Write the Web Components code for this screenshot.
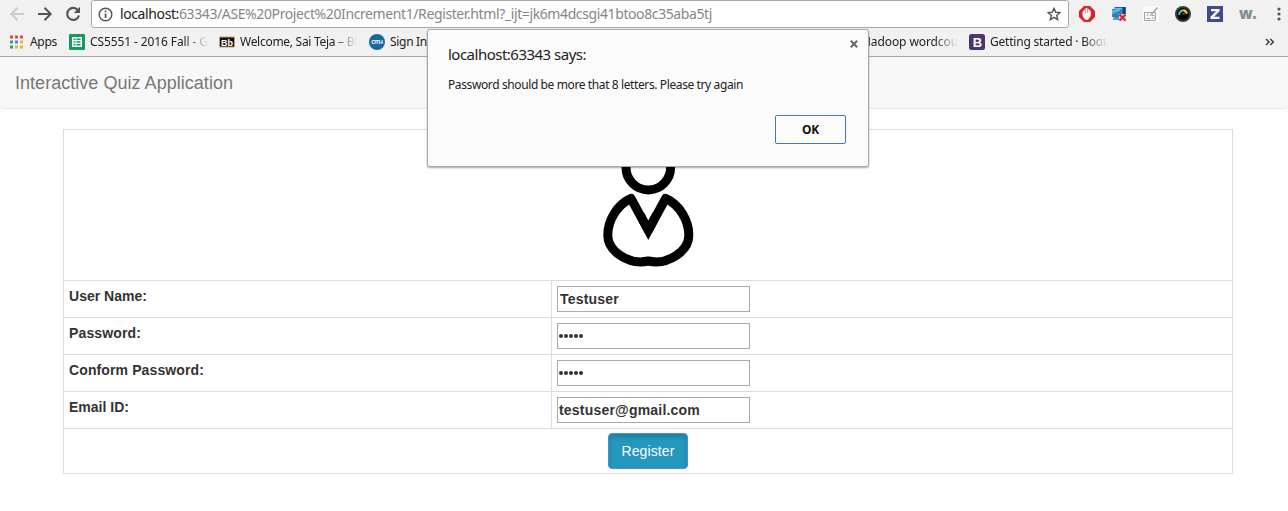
<!DOCTYPE html>
<html lang="en">
<head>
<meta charset="utf-8">
<title>Register</title>
<style>
html,body{margin:0;height:100%;background:#fff;overflow:hidden}
body{font-family:"Liberation Sans",Arial,sans-serif;color:#333}
</style>
</head>
<body>
<quiz-window></quiz-window>
<script>
const define = (name, html, ready) => {
  const t = document.createElement('template');
  t.innerHTML = html;
  customElements.define(name, class extends HTMLElement {
    constructor() {
      super();
      this.attachShadow({mode: 'open'}).append(t.content.cloneNode(true));
    }
    connectedCallback() { if (ready) ready(this, this.shadowRoot); }
  });
};

/* A single line of text tracked so that it fills the width given in "w". */
define('fit-text', `<style>:host{display:block;white-space:pre;flex:none}span{display:inline-block}</style><span><slot></slot></span>`,
(el, root) => {
  const span = root.querySelector('span');
  const w = +el.getAttribute('w');
  const n = el.textContent.length;
  el.style.width = w + 'px';
  span.style.letterSpacing = '0';
  const natural = span.getBoundingClientRect().width;
  if (natural) span.style.letterSpacing = ((w - natural) / n) + 'px';
});

define('book-mark', `<style>
:host{display:flex;align-items:center;height:16px;flex:none;font:12px/16px "Noto Sans","Open Sans",sans-serif;color:#222}
::slotted(svg){flex:none;margin-right:5px;display:block}
:host([fade]) ::slotted(fit-text){-webkit-mask-image:linear-gradient(90deg,#000 calc(100% - 24px),transparent);mask-image:linear-gradient(90deg,#000 calc(100% - 24px),transparent)}
</style><slot></slot>`);

define('browser-bar', `<style>
:host{display:block;height:57px;background:#f1f1f1;border-bottom:1px solid #a9a9a9;box-sizing:border-box}
.top{display:flex;height:28px;align-items:center}
.nav{display:flex;width:91px;box-sizing:border-box;padding-left:9px;gap:12px}
svg{display:block;flex:none}
.box{width:978px;height:28px;box-sizing:border-box;border:1px solid #a8a8a8;border-radius:3px;background:#fff;display:flex;align-items:center;padding:0 7px 0 6px;font:14px/20px "Noto Sans","Open Sans",sans-serif;color:#868686}
.box b{font-weight:400;color:#222}
.box fit-text{margin-left:7px;margin-right:auto}
.ext{display:flex;flex:1;padding-left:10px;gap:16px;align-items:center}
.marks{display:flex;height:28px;align-items:center;padding-left:9px}
.w{font:800 15px/16px "Open Sans",sans-serif;color:#829096;width:16px;margin-top:-3px}
</style>
<div class="top">
 <div class="nav">
  <svg width="16" height="16" viewBox="0 0 16 16" fill="none" stroke="#ccc" stroke-width="2"><path d="M15 8H3M8.5 1.800L2.300 8l6.200 6.200"/></svg>
  <svg width="16" height="16" viewBox="0 0 16 16" fill="none" stroke="#555" stroke-width="2"><path d="M1 8h12M7.500 1.800L13.700 8l-6.200 6.200"/></svg>
  <svg width="16" height="16" viewBox="0 0 16 16"><path d="M13.200 4.500A6 6 0 1 0 14 9.500" fill="none" stroke="#555" stroke-width="2.100"/><path d="M15 .8v6.200H8.800z" fill="#555"/></svg>
 </div>
 <div class="box">
  <svg width="15" height="15" viewBox="0 0 15 15"><circle cx="7.500" cy="7.500" r="6.300" fill="none" stroke="#555" stroke-width="1.500"/><path d="M6.700 6.500h1.700V11H6.700zM6.700 3.600h1.700v1.700H6.700z" fill="#555"/></svg>
  <fit-text w="592"><b>localhost:</b>63343/ASE%20Project%20Increment1/Register.html?_ijt=jk6m4dcsgi41btoo8c35aba5tj</fit-text>
  <svg width="14" height="14" viewBox="0 0 14 14"><path d="M7 1.300l1.700 4 4.200.3-3.200 2.800 1 4.300L7 10.400l-3.700 2.300 1-4.300L1.100 5.600l4.200-.3z" fill="none" stroke="#555" stroke-width="1.400"/></svg>
 </div>
 <div class="ext">
  <svg width="16" height="16" viewBox="0 0 16 16"><path d="M5 0h6l5 5v6l-5 5H5l-5-5V5z" fill="#df2027"/><path d="M6 13.500C3.800 11.500 3.300 9 3.400 6l1.300-1.500L6 3l1.500-1.200L9.500 3l1.600 1.400.8 1.600c.3 3-.8 6-3.200 8z" fill="#fff"/><path d="M6.400 2.500v5M8.600 1.500v5.500" stroke="#df2027" stroke-width=".5"/></svg>
  <svg width="16" height="16" viewBox="0 0 16 16"><path d="M3.500 1H15v9l-4 3H3.500z" fill="#1d689d"/><path d="M1 3h10v8H1z" fill="#2a83bd"/><path d="M4 2h8L5 7z" fill="#65b9e3"/><path d="M1 4h6l-6 5z" fill="#62afd8"/><path d="M2 11.500h6V14H2z" fill="#5aa0c8"/><path d="M12 1h2v7h-2z" fill="#173f6b"/><path d="M8 8h7v7H8z" fill="#f3c8cb"/><path d="M8.500 8.500l6 6M14.500 8.500l-6 6" stroke="#d42630" stroke-width="2"/></svg>
  <svg width="16" height="16" viewBox="0 0 16 16" fill="none" stroke="#a3a3a3"><path d="M0 0h16v16H0z" fill="#fafafa" stroke="none"/><path d="M1.500 6.500h11v8h-11zM3.500 9.500l2-1 1 1M3.500 12.500h4M9 9.500h2.500M9 12h2.500"/><path d="M7.500 9.500L14.500 1.500" stroke-width="1.500"/></svg>
  <svg width="16" height="16" viewBox="0 0 16 16"><circle cx="8" cy="8" r="8" fill="#3a3a3a"/><circle cx="8" cy="8" r="6" fill="#050505"/><g fill="none" stroke-width="2.200"><path d="M4.300 9A4 4 0 0 1 5.500 5.500" stroke="#35b9c9"/><path d="M5.300 5.700A4 4 0 0 1 9 4.400" stroke="#58cf5a"/><path d="M8.700 4.400a4 4 0 0 1 3.100 3.300" stroke="#e3cf45"/></g><path d="M7.500 8.300A2 2 0 0 1 10.300 8.300" fill="none" stroke="#d83232" stroke-width="1.300"/></svg>
  <svg width="16" height="16" viewBox="0 0 16 16"><path d="M0 0h16v16H0z" fill="#3f4a93"/><path d="M4 3h8.500v2.200L7 10.800h5.500V13H3.500v-2.200L9 5.200H4z" fill="#fff"/></svg>
  <fit-text class="w" w="17">w.</fit-text>
  <svg width="4" height="14" viewBox="0 0 4 14" style="margin-left:5px"><g fill="#555"><circle cx="2" cy="2" r="1.600"/><circle cx="2" cy="7" r="1.600"/><circle cx="2" cy="12" r="1.600"/></g></svg>
 </div>
</div>
<div class="marks">
 <book-mark style="width:60px"><svg width="16" height="16" viewBox="0 0 16 16"><path d="M1 1.500h3v3H1zM6 1.500h3v3H6z" fill="#e04a3f"/><path d="M11 1.500h3v3h-3z" fill="#e04a3f"/><path d="M1 6.500h3v3H1z" fill="#35a35a"/><path d="M6 6.500h3v3H6z" fill="#4285f4"/><path d="M11 6.500h3v3h-3z" fill="#e9b52b"/><path d="M1 11.500h3v3H1z" fill="#35a35a"/><path d="M6 11.500h3v3H6zM11 11.500h3v3h-3z" fill="#edb52a"/></svg><fit-text w="27">Apps</fit-text></book-mark>
 <book-mark fade style="width:150px"><svg width="16" height="16" viewBox="0 0 16 16"><rect width="16" height="16" rx="1" fill="#159c5b"/><path d="M3 3h10v10H3z" fill="#fff"/><path d="M4.500 4.500h2v1.500h-2zM7.500 4.500h4v1.500h-4zM4.500 7.200h2v1.600h-2zM7.500 7.200h4v1.600h-4zM4.500 10h2v1.500h-2zM7.500 10h4v1.500h-4z" fill="#159c5b"/></svg><fit-text w="118">CS5551 - 2016 Fall - G</fit-text></book-mark>
 <book-mark fade style="width:150px"><svg width="16" height="16" viewBox="0 0 16 16"><path d="M.5 3h15v10H.5z" fill="#171310" stroke="#bca45b"/><text x="2" y="11.500" font-family="Liberation Sans" font-size="9" font-weight="bold" fill="#fff" textLength="12">Bb</text></svg><fit-text w="117">Welcome, Sai Teja – Bl</fit-text></book-mark>
 <book-mark style="width:473px"><svg width="16" height="16" viewBox="0 0 16 16"><circle cx="8" cy="8" r="8" fill="#166b9e"/><text x="2.200" y="10.200" font-family="Liberation Sans" font-size="6" font-weight="bold" fill="#fff" textLength="11.600">OTH</text></svg><fit-text w="37">Sign In</fit-text></book-mark>
 <book-mark fade style="width:127px;margin-left:0"><fit-text w="96" style="margin-left:20px">Hadoop wordcou</fit-text></book-mark>
 <book-mark fade style="margin-right:auto"><svg width="16" height="16" viewBox="0 0 16 16"><rect width="16" height="16" rx="2.500" fill="#4b3471"/><text x="3.800" y="12.500" font-family="Liberation Sans" font-size="13" font-weight="bold" fill="#fff">B</text></svg><fit-text w="117">Getting started · Boot</fit-text></book-mark>
 <svg width="10" height="8" viewBox="0 0 10 8" style="margin-right:13px"><path d="M1 1l3 3-3 3M5.300 1l3 3-3 3" fill="none" stroke="#444" stroke-width="1.600"/></svg>
</div>`);

define('nav-title', `<style>
:host{display:flex;height:52px;box-sizing:border-box;background:#f8f8f8;border:solid #e7e7e7;border-width:0 0 1px;border-radius:4px;padding:16px 15px 0;font-size:18px;line-height:20px;color:#777}
</style><slot></slot>`);

define('person-icon', `<style>:host{display:block}svg{display:block}</style>
<svg width="136" height="136" viewBox="0 0 136 136" fill="none" stroke="#000" stroke-width="9"><circle cx="68.300" cy="31.600" r="22.300"/>
<path d="M51 62.500C37 68.500 27.500 85 27.800 99.500c0 15 20 30 40.500 25.500 20.500 4.500 40.500-10.500 40.500-25.500 .3-14.500-9.200-31-23.200-37L68.300 94.300z" stroke-linejoin="round"/><path d="M60 78.500l8.300 15.800 8.300-15.800" stroke-linejoin="miter"/></svg>`);

define('form-row', `<style>
:host{display:grid;grid-template-columns:488px 1fr;height:37px;box-sizing:border-box;border-top:1px solid #ddd;font-size:14px;font-weight:700;line-height:20px}
.l{padding:5px;border-right:1px solid #ddd;box-sizing:border-box}.r{padding:5px}
.in{width:193px;height:26px;box-sizing:border-box;border:1px solid #a9a9a9;background:#fff;padding:2px 1px;display:flex;line-height:20px}
</style><div class="l"><slot name="label"></slot></div><div class="r"><div class="in"><slot></slot></div></div>`);

define('pass-dots', `<style>:host{display:flex;align-items:center;gap:1px;height:20px}i{width:4px;height:4px;border-radius:50%;background:#333}</style><i></i><i></i><i></i><i></i><i></i>`);

define('register-form', `<style>
:host{display:block;width:1170px;box-sizing:border-box;margin:20px 0 0 63px;border:1px solid #ddd}
.pic{height:150px;box-sizing:border-box;display:flex;justify-content:center;padding-top:6px}
.end{height:45px;box-sizing:border-box;border-top:1px solid #ddd;display:flex;justify-content:center;align-items:flex-start;padding-top:4px}
button{width:80px;height:36px;box-sizing:border-box;padding:0;border:1px solid #4a8fdc;border-radius:4px;background:#2498bc;box-shadow:inset 0 3px 5px rgba(0,0,0,.17);color:#fff;font:14px/20px "Liberation Sans",Arial,sans-serif;display:flex;align-items:center;justify-content:center}
</style>
<div class="pic"><person-icon></person-icon></div>
<form-row><fit-text slot="label" w="78">User Name:</fit-text><fit-text w="59" style="margin-left:1px">Testuser</fit-text></form-row>
<form-row><fit-text slot="label" w="72">Password:</fit-text><pass-dots></pass-dots></form-row>
<form-row><fit-text slot="label" w="135">Conform Password:</fit-text><pass-dots></pass-dots></form-row>
<form-row><fit-text slot="label" w="60">Email ID:</fit-text><fit-text w="141">testuser@gmail.com</fit-text></form-row>
<div class="end"><button><fit-text w="53">Register</fit-text></button></div>`);

define('alert-dialog', `<style>
:host{position:absolute;left:427px;top:29px;width:442px;height:138px;box-sizing:border-box;background:#fbfbfb;border:1px solid #aaa;border-radius:3px;box-shadow:0 1px 2px rgba(0,0,0,.35);padding:14px 22px 0 20px;display:flex;flex-direction:column;font:12px/16px "Noto Sans","Open Sans",sans-serif;color:#222}
.t{font-size:15px;line-height:20px}.m{margin-top:13px}
.ok{align-self:flex-end;margin-top:22px;width:71px;height:29px;box-sizing:border-box;border:1px solid #4475c8;border-radius:2px;background:#fcfcfc;display:flex;align-items:center;justify-content:center;font-weight:700;color:#111}
.x{position:absolute;right:10px;top:10px}
</style>
<fit-text class="t" w="138">localhost:63343 says:</fit-text>
<fit-text class="m" w="295">Password should be more that 8 letters. Please try again</fit-text>
<div class="ok"><fit-text w="17">OK</fit-text></div>
<svg class="x" width="8" height="8" viewBox="0 0 8 8"><path d="M.8.8l6.400 6.400M7.200.8L.8 7.200" stroke="#666" stroke-width="2"/></svg>`);

define('quiz-window', `<style>:host{display:block;position:relative;width:1288px;height:511px;overflow:hidden;background:#fff}</style>
<browser-bar></browser-bar>
<nav-title><fit-text w="218">Interactive Quiz Application</fit-text></nav-title>
<register-form></register-form>
<alert-dialog></alert-dialog>`);
</script>
</body>
</html>
